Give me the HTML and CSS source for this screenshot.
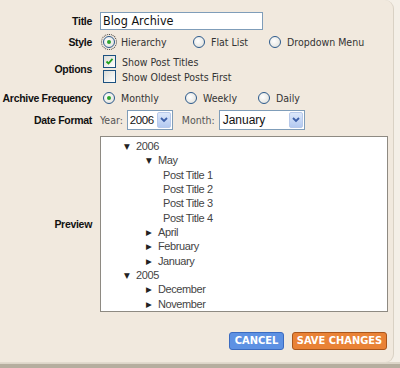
FILE: index.html
```html
<!DOCTYPE html>
<html lang="en">
<head>
    <meta charset="UTF-8">
    <title>Configure Blog Archive</title>
    <link rel="stylesheet" href="styles.css">
</head>
<body>
    <div class="panel">
        <div class="row row-title">
            <div class="label">Title</div>
            <div class="field"><div class="textbox">Blog Archive</div></div>
        </div>

        <div class="row row-style">
            <div class="label">Style</div>
            <div class="field">
                <span class="opt w-hier"><span class="radio checked focus"></span>Hierarchy</span>
                <span class="opt w-flat"><span class="radio"></span>Flat List</span>
                <span class="opt"><span class="radio"></span>Dropdown Menu</span>
            </div>
        </div>

        <div class="row row-options">
            <div class="label">Options</div>
            <div class="field stack">
                <span class="opt"><span class="check on"><svg width="9" height="9" viewBox="0 0 9 9"><path d="M1.5 4.5 L3.5 6.5 L7.5 1.8" fill="none" stroke="#21a121" stroke-width="1.8"/></svg></span>Show Post Titles</span>
                <span class="opt"><span class="check"></span>Show Oldest Posts First</span>
            </div>
        </div>

        <div class="row row-freq">
            <div class="label">Archive Frequency</div>
            <div class="field">
                <span class="opt w-month"><span class="radio checked"></span>Monthly</span>
                <span class="opt w-week"><span class="radio"></span>Weekly</span>
                <span class="opt"><span class="radio"></span>Daily</span>
            </div>
        </div>

        <div class="row row-date">
            <div class="label">Date Format</div>
            <div class="field">
                <span class="small">Year:</span>
                <div class="select sel-year"><span>2006</span><span class="arrow"><svg width="8" height="6" viewBox="0 0 8 6"><path d="M1 1 L4 4 L7 1" fill="none" stroke="#3c5fa8" stroke-width="1.8"/></svg></span></div>
                <span class="small month-lbl">Month:</span>
                <div class="select sel-month"><span>January</span><span class="arrow"><svg width="8" height="6" viewBox="0 0 8 6"><path d="M1 1 L4 4 L7 1" fill="none" stroke="#3c5fa8" stroke-width="1.8"/></svg></span></div>
            </div>
        </div>

        <div class="row row-preview">
            <div class="label">Preview</div>
            <div class="field">
                <div class="preview">
                    <div class="node l0"><span class="tri">&#9660;</span>2006</div>
                    <div class="node l1"><span class="tri">&#9660;</span>May</div>
                    <div class="node l2">Post Title 1</div>
                    <div class="node l2">Post Title 2</div>
                    <div class="node l2">Post Title 3</div>
                    <div class="node l2">Post Title 4</div>
                    <div class="node l1"><span class="tri">&#9654;</span>April</div>
                    <div class="node l1"><span class="tri">&#9654;</span>February</div>
                    <div class="node l1"><span class="tri">&#9654;</span>January</div>
                    <div class="node l0"><span class="tri">&#9660;</span>2005</div>
                    <div class="node l1"><span class="tri">&#9654;</span>December</div>
                    <div class="node l1"><span class="tri">&#9654;</span>November</div>
                </div>
            </div>
        </div>

        <div class="buttons">
            <div class="btn cancel">CANCEL</div>
            <div class="btn save">SAVE CHANGES</div>
        </div>
    </div>
</body>
</html>
```

FILE: styles.css
```css
body { margin: 0; height: 368px; background: linear-gradient(to bottom, #f4efe7 362px, #ddd6c9 362px, #ddd6c9 364px, #b6ae9f 364px); font-family: "DejaVu Sans Condensed", sans-serif; font-size: 11px; color: #222; }
.panel { width: 393px; height: 351px; background: #f1e9de; border-right: 1px solid #d9d1c4; border-bottom: 1px solid #e2dace; border-radius: 0 9px 9px 0; padding-top: 11px; }
.row { display: flex; align-items: center; }
.label { width: 92px; text-align: right; font-weight: bold; font-family: "Liberation Sans", Arial, sans-serif; font-size: 10.5px; letter-spacing: -0.3px; color: #111; flex-shrink: 0; white-space: nowrap; }
.field { margin-left: 8px; display: flex; align-items: center; color: #333; }
.stack { flex-direction: column; align-items: flex-start; }

.row-title { height: 20px; }
.row-style { height: 16px; margin-top: 3px; }
.row-options { height: 30px; margin-top: 4px; }
.row-freq { height: 16px; margin-top: 6px; }
.row-date { height: 20px; margin-top: 4px; }
.row-preview { margin-top: 6px; }

.textbox { width: 157px; height: 16px; border: 1px solid #7f9db9; background: #fff; font-size: 12.5px; line-height: 16px; padding: 0 2px; color: #111; }

.opt { display: inline-flex; align-items: center; height: 15px; font-size: 10.5px; color: #333; white-space: nowrap; }
.w-hier { width: 90px; }
.w-flat { width: 76px; }
.w-month { width: 82px; }
.w-week { width: 73px; }

.radio { width: 10px; height: 10px; border: 1px solid #2c5a8c; border-radius: 50%; background: radial-gradient(circle at 40% 40%, #ffffff, #dcdcd6); margin: 0 6px 0 3px; position: relative; }
.radio.checked::after { content: ""; position: absolute; left: 3px; top: 3px; width: 4px; height: 4px; border-radius: 50%; background: #2ea52e; }
.radio.focus { outline: 1px dotted #333; outline-offset: 1px; }

.check { width: 11px; height: 11px; border: 1px solid #1c5180; background: linear-gradient(135deg, #dcdcd6, #ffffff); margin: 0 6px 0 3px; display: inline-flex; align-items: center; justify-content: center; }

.small { font-size: 10.5px; color: #555; }
.month-lbl { margin-left: 9px; }
.select { display: flex; align-items: center; justify-content: space-between; height: 18px; border: 1px solid #7f9db9; background: #fff; margin-left: 4px; font-family: "Liberation Sans", Arial, sans-serif; font-size: 12px; color: #111; padding-left: 3px; }
.sel-year { width: 42px; padding-left: 2px; font-size: 11.5px; letter-spacing: -0.4px; }
.sel-month { width: 81px; }
.arrow { width: 14px; height: 16px; margin-right: 1px; background: linear-gradient(#dce8fb, #b3c9f0); border: 1px solid #b7c9ea; border-radius: 2px; display: flex; align-items: center; justify-content: center; box-sizing: border-box; flex-shrink: 0; }

.preview { width: 288px; height: 176px; border: 1px solid #8e8a82; background: #fff; padding-top: 2px; box-sizing: border-box; overflow: hidden; }
.node { font-family: "Liberation Sans", Arial, sans-serif; font-size: 11px; letter-spacing: -0.4px; color: #444; line-height: 14.35px; height: 14.35px; white-space: nowrap; }
.tri { font-family: "DejaVu Sans", sans-serif; font-size: 7.5px; display: inline-block; width: 12px; color: #222; vertical-align: 1px; }
.l0 { padding-left: 23px; }
.l1 { padding-left: 45px; }
.l2 { padding-left: 62px; }

.buttons { display: flex; justify-content: flex-end; gap: 8px; margin-top: 20px; padding-right: 6px; }
.btn { height: 16px; line-height: 16px; border-radius: 3px; color: #fff; font-weight: bold; font-size: 11px; text-align: center; }
.cancel { width: 53px; background: #5d91e3; border: 1px solid #3b6bc0; }
.save { width: 93px; background: #e98236; border: 1px solid #a9561c; }
```
